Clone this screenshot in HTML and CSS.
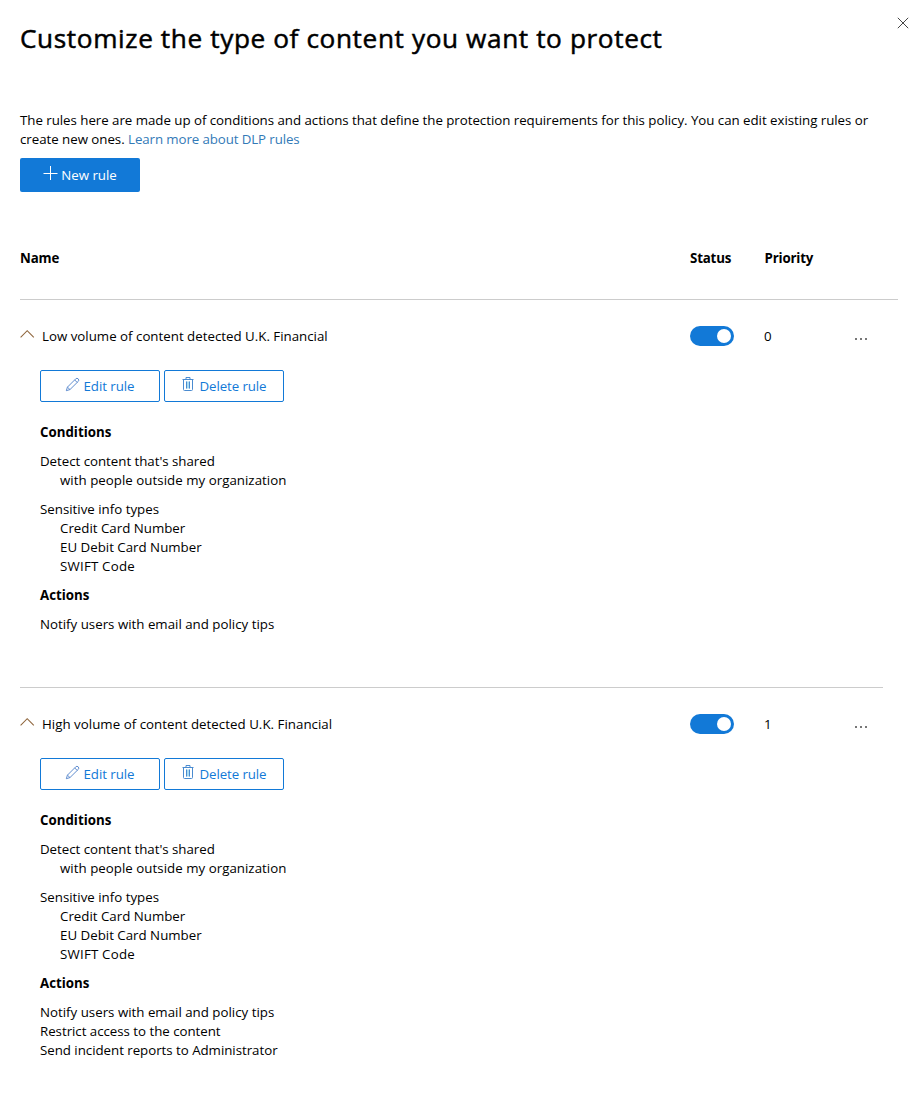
FILE: index.html
```html
<!DOCTYPE html>
<html lang="en">
<head>
<meta charset="utf-8">
<title>Customize the type of content you want to protect</title>
<link rel="stylesheet" href="styles.css">
</head>
<body>
<svg class="sprite" width="0" height="0">
  <symbol id="chevron" viewBox="0 0 16 10"><path d="M.6 8.3 7.2 1.7l6.6 6.6" fill="none" stroke="currentColor" stroke-width="1.1"/></symbol>
  <symbol id="pencil" viewBox="0 0 16 16"><path d="M1.4 14.6 2.6 10.8 11.4 2a1.9 1.9 0 0 1 2.7 2.7L5.3 13.4zM2.6 10.8l2.7 2.6M10.3 3.1l2.7 2.7" fill="none" stroke="currentColor"/></symbol>
  <symbol id="trash" viewBox="0 0 12 16"><path d="M4 5.5h4v7H4z" fill="#a9dcf3"/><path d="M.5 3.5h11M4 3.5v-2h4v2M1.5 3.5v10q0 1 1 1h7q1 0 1-1v-10M4.5 5.5v7M7.5 5.5v7" fill="none" stroke="currentColor"/></symbol>
</svg>
<main class="panel">
  <button class="close" aria-label="Close"><svg width="12" height="12" viewBox="0 0 12 12"><path d="M.8.8l10.4 10.4M11.2.8.8 11.2" fill="none" stroke="currentColor"/></svg></button>
  <h1 class="title">Customize the type of content you want to protect</h1>
  <p class="intro">The rules here are made up of conditions and actions that define the protection requirements for this policy. You can edit existing rules or<br>create new ones. <a class="link">Learn more about DLP rules</a></p>
  <button class="new-rule"><svg width="15" height="15" viewBox="0 0 15 15"><path d="M7.5 0v14M.5 7.5h14" fill="none" stroke="currentColor"/></svg><span>New rule</span></button>
  <div class="grid-row table-head"><span>Name</span><span>Status</span><span>Priority</span></div>

  <section class="rule">
    <div class="grid-row rule-head"><span class="name"><svg class="chevron"><use href="#chevron"/></svg><span>Low volume of content detected U.K. Financial</span></span><span class="toggle"><i></i></span><span class="priority">0</span><span class="more"><i></i><i></i><i></i></span></div>
    <div class="details">
      <div class="buttons"><button class="edit"><svg class="pencil"><use href="#pencil"/></svg><span>Edit rule</span></button><button class="delete"><svg class="trash"><use href="#trash"/></svg><span>Delete rule</span></button></div>
      <h2>Conditions</h2>
      <p><span class="tight">Detect content that's shared</span><span class="sub loose">with people outside my organization</span></p>
      <p><span>Sensitive info types</span><span class="sub">Credit Card Number</span><span class="sub">EU Debit Card Number</span><span class="sub swift">SWIFT Code</span></p>
      <h2>Actions</h2>
      <p><span>Notify users with email and policy tips</span></p>
    </div>
  </section>

  <section class="rule rule-divided">
    <div class="grid-row rule-head"><span class="name"><svg class="chevron"><use href="#chevron"/></svg><span class="loose">High volume of content detected U.K. Financial</span></span><span class="toggle"><i></i></span><span class="priority">1</span><span class="more"><i></i><i></i><i></i></span></div>
    <div class="details">
      <div class="buttons"><button class="edit"><svg class="pencil"><use href="#pencil"/></svg><span>Edit rule</span></button><button class="delete"><svg class="trash"><use href="#trash"/></svg><span>Delete rule</span></button></div>
      <h2>Conditions</h2>
      <p><span class="tight">Detect content that's shared</span><span class="sub loose">with people outside my organization</span></p>
      <p><span>Sensitive info types</span><span class="sub">Credit Card Number</span><span class="sub">EU Debit Card Number</span><span class="sub swift">SWIFT Code</span></p>
      <h2>Actions</h2>
      <p><span>Notify users with email and policy tips</span><span class="tight">Restrict access to the content</span><span class="tight">Send incident reports to Administrator</span></p>
    </div>
  </section>
</main>
</body>
</html>
```
FILE: styles.css
```css
* { box-sizing: border-box; }
body { margin: 0; background: #fff; color: #000; font: 13.3px/19px "Open Sans", "Noto Sans", sans-serif; }
button { font: inherit; margin: 0; padding: 0; cursor: pointer; }
h1, h2, p { margin: 0; }
.sprite { position: absolute; }
.panel { position: relative; height: 1110px; padding: 20px 21px 0 20px; overflow: hidden; }
.close { position: absolute; top: 17px; right: 10px; width: 12px; height: 12px; border: 0; background: none; color: #444; display: flex; }
.title { font-size: 26.2px; font-weight: 400; line-height: 36px; white-space: nowrap; letter-spacing: .61px; -webkit-text-stroke: .5px #000; }
.intro { margin-top: 55px; white-space: nowrap; letter-spacing: -.033px; }
.link { color: #337ab7; letter-spacing: -.1px; }
.tight { letter-spacing: -.03px; }
.loose { letter-spacing: .025px; }
.swift { letter-spacing: .2px; }
.new-rule { display: flex; align-items: center; justify-content: center; gap: 3px; width: 120px; height: 34px; margin-top: 9px; border: 0; border-radius: 2px; background: #1279d7; color: #fff; }
.new-rule svg { margin-top: -3px; }
.grid-row { display: grid; grid-template-columns: 670px 74.5px 90px 43px; align-items: center; }
.table-head { height: 84px; margin-top: 24px; padding-top: 1px; border-bottom: 1px solid #ccc; font-weight: 700; letter-spacing: -.17px; }
.rule { height: 387px; padding-top: 26px; }
.rule-divided { width: 863px; border-top: 1px solid #ccc; }
.rule-head { height: 20px; }
.name { display: flex; align-items: center; gap: 6px; }
.chevron { width: 16px; height: 10px; margin-top: -5px; color: #8f663d; }
.toggle { display: flex; justify-content: flex-end; align-items: center; width: 44px; height: 20px; padding-right: 3px; border-radius: 10px; background: #1279d7; }
.toggle i { width: 14px; height: 14px; border-radius: 50%; background: #fff; }
.priority { margin-left: -.5px; }
.more { display: flex; gap: 3px; margin-top: 6px; padding-left: .5px; }
.more i { width: 2px; height: 2px; background: #777; }
.details { padding: 24px 0 0 20px; }
.buttons { display: flex; gap: 4px; margin-bottom: 21px; }
.edit, .delete { display: flex; align-items: center; justify-content: center; width: 120px; height: 32px; border: 1px solid #1279d7; border-radius: 2px; background: #fff; color: #1279d7; }
.edit { gap: 3px; letter-spacing: -.05px; }
.delete { gap: 6px; letter-spacing: -.1px; }
.pencil { width: 15px; height: 15px; margin-top: -4px; color: #5585cc; }
.trash { width: 12px; height: 16px; margin-top: -4px; color: #4a8bd0; }
.details h2 { font-size: 13.3px; line-height: 19px; margin-bottom: 10px; }
.details p { margin-bottom: 10px; }
.details p span { display: block; white-space: nowrap; }
.details p .sub { padding-left: 20px; }
```
